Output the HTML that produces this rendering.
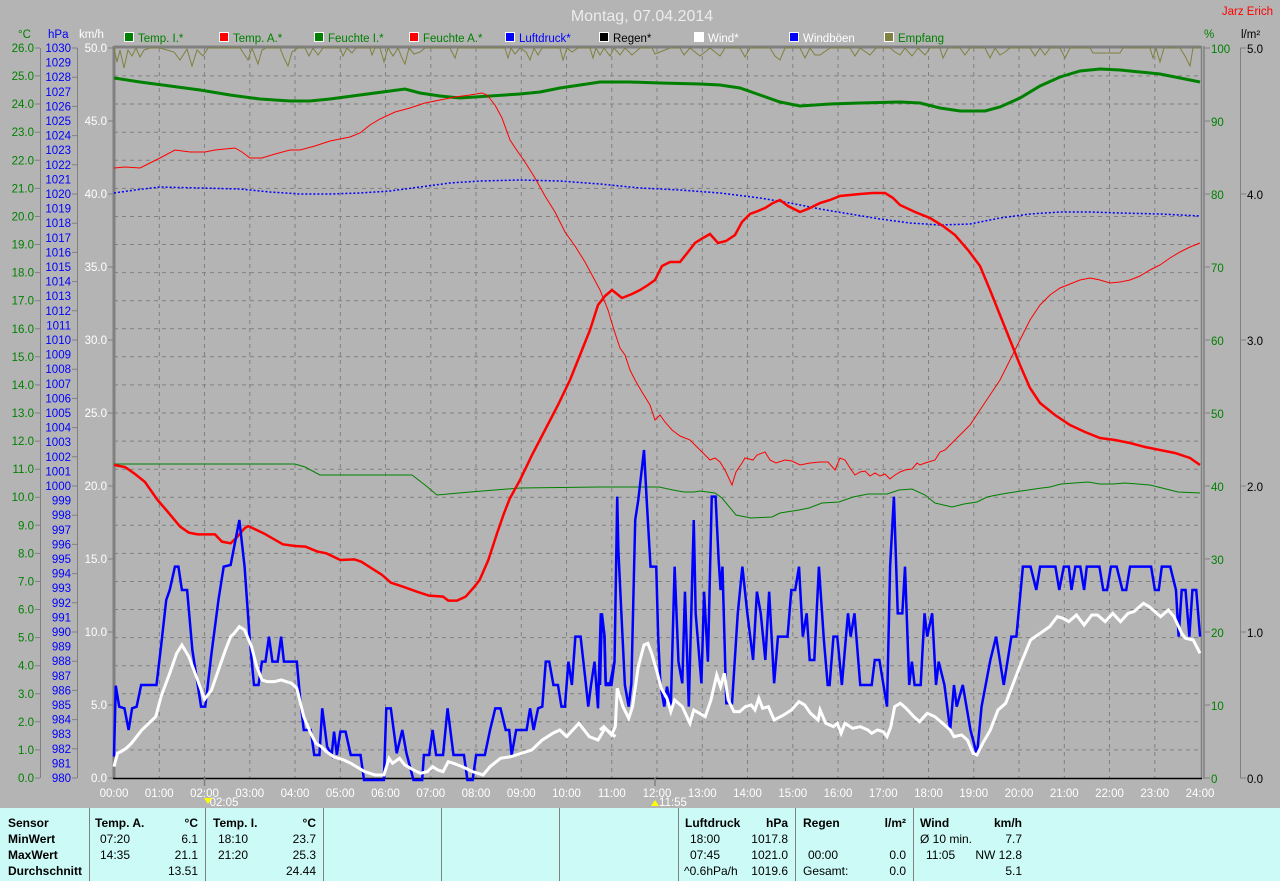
<!DOCTYPE html>
<html><head><meta charset="utf-8"><style>
html,body{margin:0;padding:0;width:1280px;height:881px;overflow:hidden;background:#b4b4b4;font-family:"Liberation Sans",sans-serif}
svg{position:absolute;left:0;top:0}
text{font-family:"Liberation Sans",sans-serif;font-size:11.5px}
.tbl{position:absolute;left:0;top:808px;width:1280px;height:73px;background:#ccfaf6;font-size:12px;font-family:"Liberation Sans",sans-serif}
.tbl div{position:absolute;white-space:nowrap}
.b{font-weight:bold}
.sep{position:absolute;top:0;width:1px;height:73px;background:#808080}
.r{text-align:right}
</style></head><body>
<svg width="1280" height="808" viewBox="0 0 1280 808">
<text x="642" y="21" fill="#ececec" font-size="16" text-anchor="middle" style="font-size:16px">Montag, 07.04.2014</text>
<text x="1273" y="15" fill="#ff0000" text-anchor="end">Jarz Erich</text>
<!-- axis headers -->
<text x="18" y="38" fill="#008000">°C</text>
<text x="48" y="38" fill="#0000ff">hPa</text>
<text x="79" y="38" fill="#ffffff">km/h</text>
<text x="1204" y="38" fill="#008000">%</text>
<text x="1241" y="38" fill="#000">l/m²</text>
<!-- legend -->
<g stroke="#fff" stroke-width="1">
<rect x="124.5" y="32.5" width="9" height="9" fill="#008000"/>
<rect x="219.5" y="32.5" width="9" height="9" fill="#ff0000"/>
<rect x="314.5" y="32.5" width="9" height="9" fill="#008000"/>
<rect x="409.5" y="32.5" width="9" height="9" fill="#ff0000"/>
<rect x="505.5" y="32.5" width="9" height="9" fill="#0000ff"/>
<rect x="599.5" y="32.5" width="9" height="9" fill="#000"/>
<rect x="694.5" y="32.5" width="9" height="9" fill="#fff"/>
<rect x="789.5" y="32.5" width="9" height="9" fill="#0000ff"/>
<rect x="884.5" y="32.5" width="9" height="9" fill="#808040"/>
</g>
<text x="138" y="42" fill="#008000">Temp. I.*</text>
<text x="233" y="42" fill="#008000">Temp. A.*</text>
<text x="328" y="42" fill="#008000">Feuchte I.*</text>
<text x="423" y="42" fill="#008000">Feuchte A.*</text>
<text x="519" y="42" fill="#0000ff">Luftdruck*</text>
<text x="613" y="42" fill="#000">Regen*</text>
<text x="708" y="42" fill="#fff">Wind*</text>
<text x="803" y="42" fill="#fff">Windböen</text>
<text x="898" y="42" fill="#008000">Empfang</text>

<!-- horizontal grid -->
<g stroke="#808080" stroke-width="1" stroke-dasharray="4,4">
<path d="M114 75.9H1200M114 104H1200M114 132.2H1200M114 160.3H1200M114 188.4H1200M114 216.5H1200M114 244.5H1200M114 272.6H1200M114 300.7H1200M114 328.8H1200M114 356.8H1200M114 384.9H1200M114 413H1200M114 441.1H1200M114 469.2H1200M114 497.2H1200M114 525.3H1200M114 553.4H1200M114 581.5H1200M114 609.5H1200M114 637.6H1200M114 665.7H1200M114 693.8H1200M114 721.8H1200M114 749.9H1200"/>
<path d="M159.3 48V778M204.5 48V778M249.8 48V778M295 48V778M340.3 48V778M385.5 48V778M430.8 48V778M476 48V778M521.3 48V778M566.5 48V778M611.8 48V778M657 48V778M702.3 48V778M747.5 48V778M792.8 48V778M838 48V778M883.3 48V778M928.5 48V778M973.8 48V778M1019 48V778M1064.3 48V778M1109.5 48V778M1154.8 48V778"/>
</g>
<!-- borders -->
<path d="M114 47H1201" stroke="#808080" stroke-width="3"/>
<path d="M114 46V779" stroke="#808080" stroke-width="3"/>
<path d="M1201.5 46V779M1204 46V779" stroke="#808080" stroke-width="1.5"/>
<path d="M113 778.5H1202" stroke="#000" stroke-width="1.5"/>
<!-- left axes -->
<g stroke="#808080" stroke-width="1">
<path d="M40.5 48V778M77.5 48V778M1240.5 48V778"/>
<path d="M35 48H40M35 75.9H40M35 104H40M35 132.2H40M35 160.3H40M35 188.4H40M35 216.5H40M35 244.5H40M35 272.6H40M35 300.7H40M35 328.8H40M35 356.8H40M35 384.9H40M35 413H40M35 441.1H40M35 469.2H40M35 497.2H40M35 525.3H40M35 553.4H40M35 581.5H40M35 609.5H40M35 637.6H40M35 665.7H40M35 693.8H40M35 721.8H40M35 749.9H40M35 778H40"/>
<path d="M72 48H77M72 77.2H77M72 106.4H77M72 135.6H77M72 164.8H77M72 194H77M72 223.2H77M72 252.4H77M72 281.6H77M72 310.8H77M72 340H77M72 369.2H77M72 398.4H77M72 427.6H77M72 456.8H77M72 486H77M72 515.2H77M72 544.4H77M72 573.6H77M72 602.8H77M72 632H77M72 661.2H77M72 690.4H77M72 719.6H77M72 748.8H77M72 778H77"/>
<path d="M108 48H113M108 121H113M108 194H113M108 267H113M108 340H113M108 413H113M108 486H113M108 559H113M108 632H113M108 705H113M108 778H113"/>
<path d="M1205 48H1210M1205 121H1210M1205 194H1210M1205 267H1210M1205 340H1210M1205 413H1210M1205 486H1210M1205 559H1210M1205 632H1210M1205 705H1210M1205 778H1210"/>
<path d="M1240 48H1246M1240 194H1246M1240 340H1246M1240 486H1246M1240 632H1246M1240 778H1246"/>
</g>
<g fill="#008000" text-anchor="end" transform="translate(0,4)">
<text x="34" y="48">26.0</text><text x="34" y="75.9">25.0</text><text x="34" y="104">24.0</text><text x="34" y="132.2">23.0</text><text x="34" y="160.3">22.0</text><text x="34" y="188.4">21.0</text><text x="34" y="216.5">20.0</text><text x="34" y="244.5">19.0</text><text x="34" y="272.6">18.0</text><text x="34" y="300.7">17.0</text><text x="34" y="328.8">16.0</text><text x="34" y="356.8">15.0</text><text x="34" y="384.9">14.0</text><text x="34" y="413">13.0</text><text x="34" y="441.1">12.0</text><text x="34" y="469.2">11.0</text><text x="34" y="497.2">10.0</text><text x="34" y="525.3">9.0</text><text x="34" y="553.4">8.0</text><text x="34" y="581.5">7.0</text><text x="34" y="609.5">6.0</text><text x="34" y="637.6">5.0</text><text x="34" y="665.7">4.0</text><text x="34" y="693.8">3.0</text><text x="34" y="721.8">2.0</text><text x="34" y="749.9">1.0</text><text x="34" y="778">0.0</text>
</g>
<g fill="#0000ff" text-anchor="end" transform="translate(0,4)">
<text x="71" y="48">1030</text><text x="71" y="62.6">1029</text><text x="71" y="77.2">1028</text><text x="71" y="91.8">1027</text><text x="71" y="106.4">1026</text><text x="71" y="121">1025</text><text x="71" y="135.6">1024</text><text x="71" y="150.2">1023</text><text x="71" y="164.8">1022</text><text x="71" y="179.4">1021</text><text x="71" y="194">1020</text><text x="71" y="208.6">1019</text><text x="71" y="223.2">1018</text><text x="71" y="237.8">1017</text><text x="71" y="252.4">1016</text><text x="71" y="267">1015</text><text x="71" y="281.6">1014</text><text x="71" y="296.2">1013</text><text x="71" y="310.8">1012</text><text x="71" y="325.4">1011</text><text x="71" y="340">1010</text><text x="71" y="354.6">1009</text><text x="71" y="369.2">1008</text><text x="71" y="383.8">1007</text><text x="71" y="398.4">1006</text><text x="71" y="413">1005</text><text x="71" y="427.6">1004</text><text x="71" y="442.2">1003</text><text x="71" y="456.8">1002</text><text x="71" y="471.4">1001</text><text x="71" y="486">1000</text><text x="71" y="500.6">999</text><text x="71" y="515.2">998</text><text x="71" y="529.8">997</text><text x="71" y="544.4">996</text><text x="71" y="559">995</text><text x="71" y="573.6">994</text><text x="71" y="588.2">993</text><text x="71" y="602.8">992</text><text x="71" y="617.4">991</text><text x="71" y="632">990</text><text x="71" y="646.6">989</text><text x="71" y="661.2">988</text><text x="71" y="675.8">987</text><text x="71" y="690.4">986</text><text x="71" y="705">985</text><text x="71" y="719.6">984</text><text x="71" y="734.2">983</text><text x="71" y="748.8">982</text><text x="71" y="763.4">981</text><text x="71" y="778">980</text>
</g>
<g fill="#fff" text-anchor="end" transform="translate(0,4)">
<text x="107" y="48">50.0</text><text x="107" y="121">45.0</text><text x="107" y="194">40.0</text><text x="107" y="267">35.0</text><text x="107" y="340">30.0</text><text x="107" y="413">25.0</text><text x="107" y="486">20.0</text><text x="107" y="559">15.0</text><text x="107" y="632">10.0</text><text x="107" y="705">5.0</text><text x="107" y="778">0.0</text>
</g>
<g fill="#008000" transform="translate(0,5)">
<text x="1211" y="48">100</text><text x="1211" y="121">90</text><text x="1211" y="194">80</text><text x="1211" y="267">70</text><text x="1211" y="340">60</text><text x="1211" y="413">50</text><text x="1211" y="486">40</text><text x="1211" y="559">30</text><text x="1211" y="632">20</text><text x="1211" y="705">10</text><text x="1211" y="778">0</text>
</g>
<g fill="#000" transform="translate(0,5)">
<text x="1247" y="48">5.0</text><text x="1247" y="194">4.0</text><text x="1247" y="340">3.0</text><text x="1247" y="486">2.0</text><text x="1247" y="632">1.0</text><text x="1247" y="778">0.0</text>
</g>
<!-- x labels -->
<g fill="#fff" text-anchor="middle">
<text x="114" y="797">00:00</text><text x="159.3" y="797">01:00</text><text x="204.5" y="797">02:00</text><text x="249.8" y="797">03:00</text><text x="295" y="797">04:00</text><text x="340.3" y="797">05:00</text><text x="385.5" y="797">06:00</text><text x="430.8" y="797">07:00</text><text x="476" y="797">08:00</text><text x="521.3" y="797">09:00</text><text x="566.5" y="797">10:00</text><text x="611.8" y="797">11:00</text><text x="657" y="797">12:00</text><text x="702.3" y="797">13:00</text><text x="747.5" y="797">14:00</text><text x="792.8" y="797">15:00</text><text x="838" y="797">16:00</text><text x="883.3" y="797">17:00</text><text x="928.5" y="797">18:00</text><text x="973.8" y="797">19:00</text><text x="1019" y="797">20:00</text><text x="1064.3" y="797">21:00</text><text x="1109.5" y="797">22:00</text><text x="1154.8" y="797">23:00</text><text x="1200" y="797">24:00</text>
<text x="224" y="806">02:05</text><text x="673" y="806">11:55</text>
</g>
<path d="M204 798l4 6 4-6z" fill="#ffff00"/>
<path d="M651 806l4-6 4 6z" fill="#ffff00"/>
<path d="M204.5 778v8M655 778v8" stroke="#808080" stroke-width="1.5"/>

<!-- Empfang -->
<polyline fill="none" stroke="#808040" stroke-width="1" points="114,48 117,62 120,50 124,68 128,50 132,56 136,48 140,57 144,50 150,48 160,48 174,52 180,60 187,49 192,66 197,50 203,56 208,48 240,48 244,54 248,60 252,48 258,64 262,50 266,48 280,48 284,58 288,66 292,52 298,48 305,48 309,56 313,48 318,55 323,48 340,48 343,56 347,48 352,53 356,48 370,48 372,55 375,48 380,48 384,62 388,48 393,56 398,48 402,58 405,64 409,48 414,54 420,52 425,48 450,48 455,58 458,48 505,48 508,58 511,48 515,54 520,48 526,52 530,60 534,48 538,55 542,48 560,48 563,60 567,48 572,52 578,48 590,48 593,58 596,48 600,55 604,48 610,56 614,48 620,55 625,48 632,55 640,48 652,48 655,54 660,52 670,48 680,48 684,55 690,48 700,56 705,52 710,48 720,56 725,48 740,48 745,57 750,48 770,48 775,56 780,60 785,48 800,48 805,58 810,48 815,55 820,55 830,48 850,48 855,56 860,48 870,55 876,48 890,48 895,52 900,55 905,48 912,56 918,48 925,55 930,48 940,48 943,58 948,48 960,48 965,55 970,48 985,48 990,58 995,48 1000,55 1005,52 1010,48 1030,48 1035,56 1040,48 1045,55 1050,48 1060,48 1065,58 1070,48 1090,48 1093,53 1120,53 1123,48 1150,48 1153,58 1156,48 1160,62 1164,48 1180,48 1185,56 1190,66 1193,48 1200,48"/>

<!-- Temp I thick green -->
<polyline fill="none" stroke="#008000" stroke-width="3" points="114,78 140,82 170,86 200,90 230,95 260,99 290,101 310,101 330,99 360,95 390,91 405,89 420,93 440,96 460,98 490,96 520,94 540,92 560,88 580,85 600,82 630,82 660,83 700,84 720,85 740,88 760,95 780,102 800,106 830,104 860,103 900,102 920,103 940,108 960,111 985,111 1000,107 1020,98 1040,86 1060,77 1080,71 1100,69 1120,70 1140,72 1160,74 1180,78 1200,82"/>
<!-- Feuchte A thin red -->
<polyline fill="none" stroke="#ff0000" stroke-width="1" points="114,168 125,167 140,168 150,163 160,158 175,150 190,152 205,152 215,150 225,149 235,148 242,152 250,158 262,158 275,154 290,150 300,150 315,146 330,141 350,137 360,133 370,125 380,119 395,112 410,108 425,103 440,100 455,97 470,95 482,93 487,95 495,105 502,118 510,140 518,152 525,162 535,178 545,196 555,212 565,232 575,246 585,262 592,275 600,290 608,310 614,330 620,348 625,355 630,370 635,380 642,392 650,405 655,420 660,415 665,422 672,430 680,436 690,440 695,445 700,450 705,455 710,460 715,458 720,462 725,470 732,485 736,472 742,463 745,458 753,460 757,455 765,452 770,460 776,463 785,460 792,461 800,465 810,463 820,462 828,462 835,470 840,458 845,460 850,468 855,475 860,472 865,471 870,476 875,473 880,476 885,474 890,479 895,475 900,472 905,470 912,469 917,463 920,465 925,463 935,460 940,452 945,450 950,445 960,435 970,425 980,410 990,395 1000,380 1010,360 1020,340 1030,320 1040,305 1050,295 1060,288 1070,284 1080,280 1090,278 1100,280 1110,283 1120,282 1130,280 1140,276 1150,270 1160,265 1170,258 1180,252 1190,247 1200,243"/>
<!-- Temp I thin green -->
<polyline fill="none" stroke="#008000" stroke-width="1" points="114,464 295,464 305,467 320,475 412,475 425,485 437,495 470,492 520,488 600,487 659,487 673,490 684,492 694,492 700,491 715,493 722,498 736,515 751,518 772,517 780,513 799,510 809,508 822,503 839,502 853,497 868,494 887,494 899,490 912,489 925,495 935,503 952,507 964,504 977,502 987,497 1002,494 1021,491 1042,488 1050,487 1061,484 1088,482 1100,484 1113,484 1125,483 1150,485 1162,488 1178,492 1200,493"/>
<!-- Luftdruck dotted -->
<polyline fill="none" stroke="#0000ff" stroke-width="1.5" stroke-dasharray="2,2" points="114,193 135,190 160,187 200,188 240,189 270,192 300,194 330,194 360,193 390,191 420,187 450,183 480,181 520,180 560,181 600,184 640,188 680,190 720,193 760,198 790,203 820,209 850,214 880,219 910,223 940,225 970,224 1000,218 1030,214 1060,212 1090,212 1120,213 1160,214 1200,216"/>
<!-- Temp A thick red -->
<polyline fill="none" stroke="#ff0000" stroke-width="2.5" points="114,465 125,467 135,474 145,482 157.5,500"/>
<g transform="translate(114,500) scale(0.3482,0.3333)">
<polyline fill="none" stroke="#ff0000" stroke-width="2.5" vector-effect="non-scaling-stroke" points="125,0 150,30 190,80 215,98 240,103 290,103 310,125 335,130 350,115 375,85 385,78 430,100 485,133 520,138 550,140 585,155 610,160 650,180 690,178 710,185 740,205 770,225 795,248 830,260 870,275 905,287 945,290 960,302 985,302 1010,290 1035,260 1050,240 1075,180 1100,100 1120,40 1135,0"/>
</g>
<polyline fill="none" stroke="#ff0000" stroke-width="2.5" points="509,500 520,480 532,455 545,430 558,405 570,380 580,355 590,330 598,305 605,296 612,290 622,298 632,294 640,290 648,285 655,280 662,266 670,262 680,262 688,252 695,243 703,238 710,234 718,243 726,241 735,235 742,222 750,214 758,211 765,208 773,203 780,200 788,206 800,212 810,208 820,203 830,200 840,196 850,195 860,194 873,193 885,193 893,198 900,205 915,212 930,218 943,226 955,235 968,250 980,266 990,290 1000,315 1010,340 1020,365 1030,388 1040,403 1055,415 1070,425 1085,432 1100,438 1115,440 1130,443 1145,447 1160,450 1175,453 1190,458 1200,465"/>

<!-- Windböen -->
<g transform="translate(114,500) scale(0.3482,0.3333)">
<polyline fill="none" stroke="#0000ff" stroke-width="2.5" vector-effect="non-scaling-stroke" points="0,770 5,557 15,620 30,625 42,690 52,625 65,620 78,555 122,555 135,440 150,300 160,270 175,200 185,200 195,270 210,270 225,450 250,620 262,620 280,460 300,300 315,200 335,195 360,60 375,200 390,420 402,555 415,555 425,485 435,485 445,410 455,485 470,485 480,410 488,485 525,485 535,600 545,690 565,690 575,765 590,765 598,625 612,740 625,765 632,695 640,765 650,695 665,695 680,765 708,765 718,840 775,840 782,625 795,625 812,760 828,690 840,760 860,840 885,840 890,765 905,765 915,690 925,765 945,765 958,625 975,765 1005,765 1015,840 1030,840 1040,765 1065,765 1080,690 1095,625 1110,625 1125,690 1135,690 1142,765 1155,690 1185,690 1195,625 1205,690 1218,625 1230,620 1240,485 1250,485 1262,555 1275,555 1285,620 1295,620 1305,485 1315,555 1325,410 1340,410 1355,550 1362,620 1370,555 1380,485 1390,625 1398,340 1408,400 1412,550 1425,550 1437,485"/>
</g>
<g transform="translate(600,440) scale(0.3827,0.3333)">
<polyline fill="none" stroke="#0000ff" stroke-width="2.5" vector-effect="non-scaling-stroke" points="0,735 5,520 12,590 15,735 30,735 38,665 45,170 48,330 55,500 65,735 75,800 82,730 92,240 100,180 115,30 122,180 132,380 147,380 152,590 158,735 168,800 175,740 185,800 195,380 205,665 215,730 222,455 232,800 245,240 250,520 265,730 272,455 282,665 292,170 302,170 310,360 315,450 320,380 330,790 345,790 360,520 372,380 385,520 400,660 410,455 420,520 432,660 442,455 455,730 465,590 490,590 500,450 510,450 520,380 530,590 540,520 548,660 560,660 572,380 585,600 595,735 600,735 610,590 620,590 632,735 648,520 655,590 665,520 680,735 710,735 718,660 730,660 750,800 758,380 768,170 778,520 790,520 797,380 808,735 815,665 822,735 838,735 848,520 855,590 868,520 878,735 885,665 900,735 915,870 925,735 932,800 948,735 968,870 985,945 997,800 1020,660 1035,590 1055,735 1075,590 1088,590 1105,380 1125,380 1140,450 1150,380 1190,380 1200,450 1212,380 1225,380 1232,450 1242,380 1255,380 1265,450 1272,380 1305,380 1315,450 1325,450 1335,380 1350,380 1365,450 1375,450 1385,380 1440,380 1450,450 1460,450 1468,380 1490,380 1505,450 1512,590 1520,450 1530,450 1540,590 1548,450 1558,450 1568,590"/>
</g>
<!-- Wind white -->
<g transform="translate(114,500) scale(0.3482,0.3333)">
<polyline fill="none" stroke="#ffffff" stroke-width="3" vector-effect="non-scaling-stroke" points="0,800 10,760 20,755 35,745 50,730 80,690 120,650 135,590 160,520 180,460 195,435 215,470 240,540 260,598 280,570 300,510 320,450 335,410 345,400 360,380 375,390 395,440 410,500 425,540 440,545 460,545 480,540 510,550 525,565 545,650 565,700 580,730 595,740 610,755 630,770 660,780 680,790 720,815 750,825 775,825 790,775 800,790 820,775 835,795 860,810 880,820 900,815 915,800 930,810 945,815 960,785 975,790 1000,800 1030,815 1060,825 1080,800 1110,775 1140,770 1200,750 1230,720 1260,700 1280,690 1300,710 1335,670 1365,710 1390,720 1410,685 1440,710"/>
</g>
<g transform="translate(600,440) scale(0.3827,0.3333)">
<polyline fill="none" stroke="#ffffff" stroke-width="3" vector-effect="non-scaling-stroke" points="0,870 10,860 30,885 40,860 45,745 60,800 75,835 85,800 100,680 115,615 125,610 135,640 150,700 160,745 175,775 185,815 195,780 215,800 235,850 245,810 260,820 275,830 290,780 305,705 315,740 325,700 335,780 350,815 365,815 380,800 395,795 405,810 415,775 425,805 440,800 455,840 480,825 500,810 520,785 535,795 550,820 570,840 575,810 590,850 610,860 620,850 630,880 640,850 660,865 680,860 700,870 710,880 725,870 740,875 750,890 760,860 770,800 785,790 800,805 820,830 835,845 855,820 875,830 895,850 915,870 925,890 945,885 960,900 975,940 985,945 1000,910 1020,870 1040,810 1060,790 1080,730 1100,670 1125,600 1150,580 1175,560 1195,530 1210,535 1225,545 1245,525 1265,555 1285,525 1300,525 1320,545 1340,520 1360,545 1380,520 1395,515 1420,490 1435,500 1465,530 1485,510 1500,530 1520,580 1530,595 1550,600 1568,640"/>
</g>
</svg>
<div class="tbl">
<div class="sep" style="left:89px"></div><div class="sep" style="left:205px"></div><div class="sep" style="left:323px"></div><div class="sep" style="left:441px"></div><div class="sep" style="left:559px"></div><div class="sep" style="left:678px"></div><div class="sep" style="left:795px"></div><div class="sep" style="left:913px"></div>
<div class="b" style="left:8px;top:8px">Sensor</div>
<div class="b" style="left:8px;top:24px">MinWert</div>
<div class="b" style="left:8px;top:40px">MaxWert</div>
<div class="b" style="left:8px;top:56px">Durchschnitt</div>
<div class="b" style="left:95px;top:8px">Temp. A.</div><div class="b r" style="left:160px;width:38px;top:8px">°C</div>
<div style="left:100px;top:24px">07:20</div><div class="r" style="left:160px;width:38px;top:24px">6.1</div>
<div style="left:100px;top:40px">14:35</div><div class="r" style="left:160px;width:38px;top:40px">21.1</div>
<div class="r" style="left:160px;width:38px;top:56px">13.51</div>
<div class="b" style="left:213px;top:8px">Temp. I.</div><div class="b r" style="left:278px;width:38px;top:8px">°C</div>
<div style="left:218px;top:24px">18:10</div><div class="r" style="left:278px;width:38px;top:24px">23.7</div>
<div style="left:218px;top:40px">21:20</div><div class="r" style="left:278px;width:38px;top:40px">25.3</div>
<div class="r" style="left:278px;width:38px;top:56px">24.44</div>
<div class="b" style="left:685px;top:8px">Luftdruck</div><div class="b r" style="left:750px;width:38px;top:8px">hPa</div>
<div style="left:690px;top:24px">18:00</div><div class="r" style="left:740px;width:48px;top:24px">1017.8</div>
<div style="left:690px;top:40px">07:45</div><div class="r" style="left:740px;width:48px;top:40px">1021.0</div>
<div style="left:684px;top:56px">^0.6hPa/h</div><div class="r" style="left:740px;width:48px;top:56px">1019.6</div>
<div class="b" style="left:803px;top:8px">Regen</div><div class="b r" style="left:868px;width:38px;top:8px">l/m²</div>
<div style="left:808px;top:40px">00:00</div><div class="r" style="left:868px;width:38px;top:40px">0.0</div>
<div style="left:803px;top:56px">Gesamt:</div><div class="r" style="left:868px;width:38px;top:56px">0.0</div>
<div class="b" style="left:920px;top:8px">Wind</div><div class="b r" style="left:972px;width:50px;top:8px">km/h</div>
<div style="left:920px;top:24px">Ø 10 min.</div><div class="r" style="left:972px;width:50px;top:24px">7.7</div>
<div style="left:926px;top:40px">11:05</div><div class="r" style="left:972px;width:50px;top:40px">NW 12.8</div>
<div class="r" style="left:972px;width:50px;top:56px">5.1</div>
</div>
</body></html>
